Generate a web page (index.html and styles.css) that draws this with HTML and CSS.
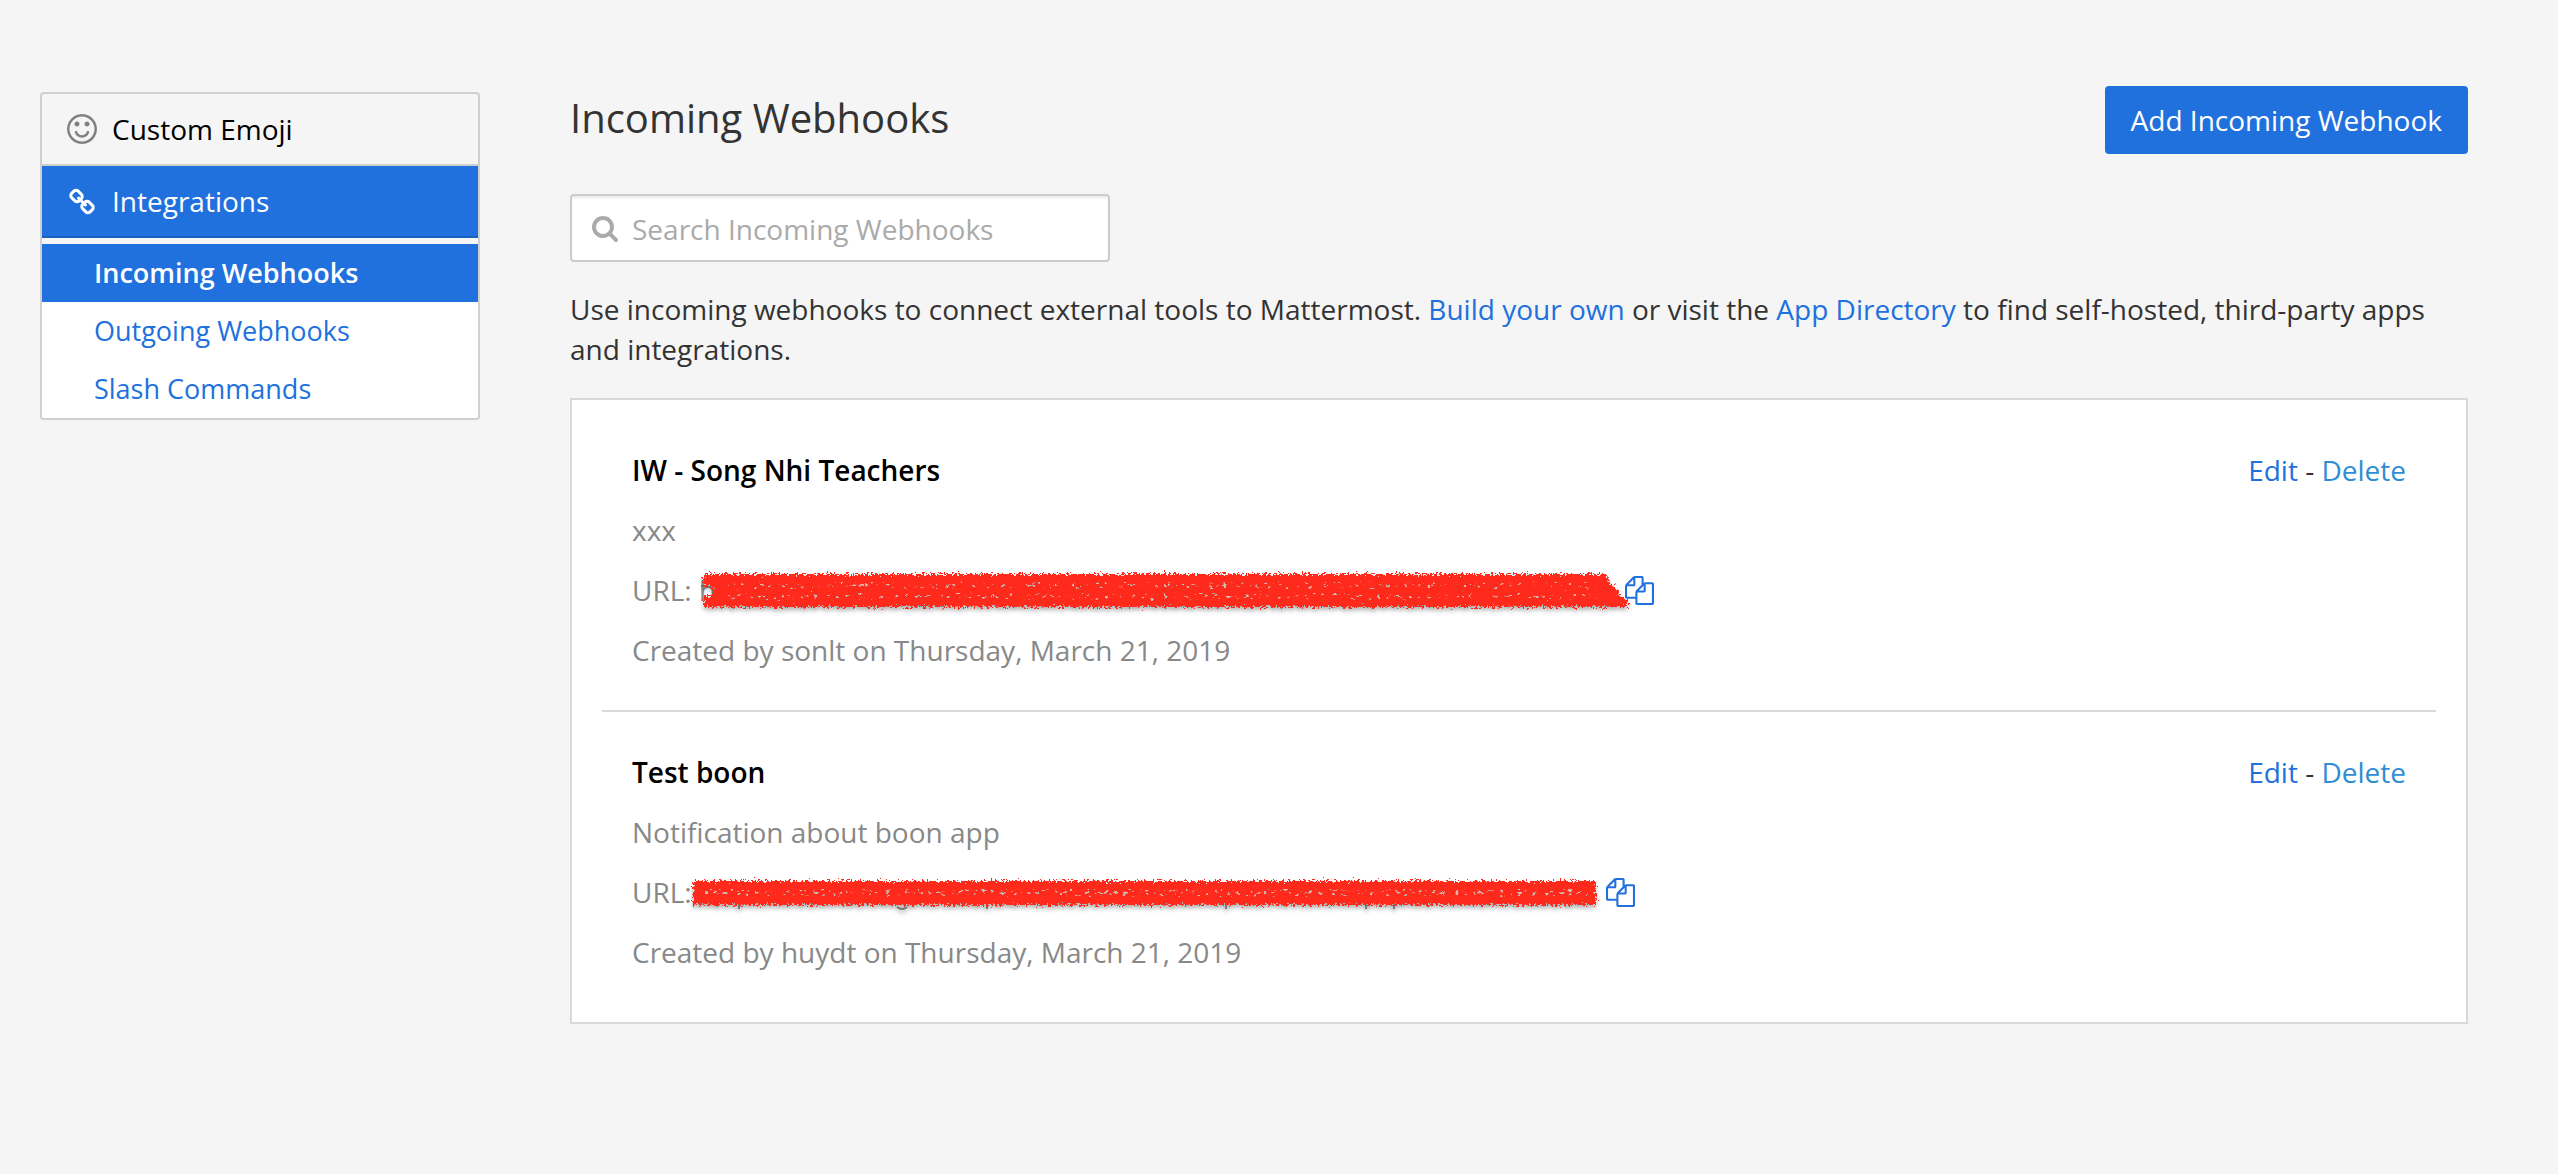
FILE: index.html
```html
<!DOCTYPE html>
<html lang="en">
<head>
<meta charset="utf-8">
<title>Incoming Webhooks</title>
<link rel="stylesheet" href="styles.css">
</head>
<body>
<svg class="defs" aria-hidden="true">
  <defs>
    <symbol id="icon-copy" viewBox="0 0 1792 1792"><path d="M1696 384q40 0 68 28t28 68v1216q0 40-28 68t-68 28h-960q-40 0-68-28t-28-68v-288h-544q-40 0-68-28t-28-68v-672q0-40 20-88t48-76l408-408q28-28 76-48t88-20h416q40 0 68 28t28 68v328q68-40 128-40h416zm-544 213l-299 299h299v-299zm-640-384l-299 299h299v-299zm196 647l316-316v-416h-384v416q0 40-28 68t-68 28h-416v640h512v-256q0-40 20-88t48-76zm956 804v-1152h-384v416q0 40-28 68t-68 28h-416v640h896z"/></symbol>
    <!-- Crayon stroke: ragged outline, grainy holes along the pen passes -->
    <filter id="crayon" x="-1%" y="-20%" width="102%" height="150%">
      <feTurbulence type="fractalNoise" baseFrequency="0.45" numOctaves="3" seed="4" result="edge"/>
      <feDisplacementMap in="SourceGraphic" in2="edge" scale="10" xChannelSelector="R" yChannelSelector="G"/>
    </filter>
    <filter id="grain" x="-1%" y="-20%" width="102%" height="150%">
      <feTurbulence type="fractalNoise" baseFrequency="0.22 0.35" numOctaves="2" seed="9" result="noise"/>
      <feColorMatrix in="noise" type="matrix" values="0 0 0 0 .62  0 0 0 0 .5  0 0 0 0 .46  9 0 0 0 -5.2" result="holes"/>
      <feDisplacementMap in="SourceAlpha" in2="noise" scale="12" xChannelSelector="R" yChannelSelector="G" result="band"/>
      <feComposite in="holes" in2="band" operator="in"/>
    </filter>
  </defs>
</svg>

<div class="layout">
  <nav class="sidebar" aria-label="Backstage">
    <a class="category" href="#emoji">
      <svg class="category-icon" viewBox="128 128 1536 1536" aria-hidden="true"><path d="M1262 1075q-37 121-138 195t-228 74-228-74-138-195q-8-25 4-48.5t38-31.5q25-8 48.5 4t31.5 38q25 80 92.5 129.5t151.5 49.5 151.5-49.5 92.5-129.5q8-26 32-38t49-4 37 31.5 4 48.5zm-494-435q0 53-37.5 90.5t-90.5 37.5-90.5-37.5-37.5-90.5 37.5-90.5 90.5-37.5 90.5 37.5 37.5 90.5zm512 0q0 53-37.5 90.5t-90.5 37.5-90.5-37.5-37.5-90.5 37.5-90.5 90.5-37.5 90.5 37.5 37.5 90.5zm256 256q0-130-51-248.5t-136.5-204-204-136.5-248.5-51-248.5 51-204 136.5-136.5 204-51 248.5 51 248.5 136.5 204 204 136.5 248.5 51 248.5-51 204-136.5 136.5-204 51-248.5zm128 0q0 209-103 385.5t-279.5 279.5-385.5 103-385.5-103-279.5-279.5-103-385.5 103-385.5 279.5-279.5 385.5-103 385.5 103 279.5 279.5 103 385.5z"/></svg>
      <span>Custom Emoji</span>
    </a>
    <a class="category category-active" href="#integrations">
      <svg class="category-icon" viewBox="-64 -160 1920 1920" aria-hidden="true"><path d="M1520 1216q0-40-28-68l-208-208q-28-28-68-28-42 0-72 32 3 3 19 18.5t21.5 21.5 15 19 13 25.5 3.5 27.5q0 40-28 68t-68 28q-15 0-27.5-3.5t-25.5-13-19-15-21.5-21.5-18.5-19q-33 31-33 73 0 40 28 68l206 207q27 27 68 27 40 0 68-26l147-146q28-28 28-67zm-703-705q0-40-28-68l-206-207q-28-28-68-28-39 0-68 27l-147 146q-28 28-28 67 0 40 28 68l208 208q27 27 68 27 42 0 72-31-3-3-19-18.5t-21.5-21.5-15-19-13-25.5-3.5-27.5q0-40 28-68t68-28q15 0 27.5 3.5t25.5 13 19 15 21.5 21.5 18.5 19q33-31 33-73zm895 705q0 120-85 203l-147 146q-83 83-203 83-121 0-204-85l-206-207q-83-83-83-203 0-123 88-209l-88-88q-86 88-208 88-120 0-204-84l-208-208q-84-84-84-204t85-203l147-146q83-83 203-83 121 0 204 85l206 207q83 83 83 203 0 123-88 209l88 88q86-88 208-88 120 0 204 84l208 208q84 84 84 204z"/></svg>
      <span>Integrations</span>
    </a>
    <div class="sections">
      <a class="section section-active" href="#incoming">Incoming Webhooks</a>
      <a class="section" href="#outgoing">Outgoing Webhooks</a>
      <a class="section" href="#commands">Slash Commands</a>
    </div>
  </nav>

  <main class="content">
    <header class="page-header">
      <h1 class="page-title">Incoming Webhooks</h1>
      <button class="add-button" type="button">Add Incoming Webhook</button>
    </header>

    <label class="search">
      <svg class="search-icon" viewBox="64 128 1664 1664" aria-hidden="true"><path d="M1216 832q0-185-131.5-316.5t-316.5-131.5-316.5 131.5-131.5 316.5 131.5 316.5 316.5 131.5 316.5-131.5 131.5-316.5zm512 832q0 52-38 90t-90 38q-54 0-90-38l-343-342q-179 124-399 124-143 0-273.5-55.5t-225-150-150-225-55.5-273.5 55.5-273.5 150-225 225-150 273.5-55.5 273.5 55.5 225 150 150 225 55.5 273.5q0 220-124 399l343 343q37 37 37 90z"/></svg>
      <input class="search-input" type="search" placeholder="Search Incoming Webhooks" aria-label="Search Incoming Webhooks">
    </label>

    <p class="intro">Use incoming webhooks to connect external tools to Mattermost. <a href="#build">Build your own</a> or visit the <a href="#apps">App Directory</a> to find self-hosted, third-party apps and integrations.</p>

    <div class="list">
      <article class="item">
        <div class="item-head">
          <h2 class="item-title">IW - Song Nhi Teachers</h2>
          <div class="item-actions"><a href="#edit">Edit</a> - <a class="delete" href="#delete">Delete</a></div>
        </div>
        <p class="item-line">xxx</p>
        <div class="item-line item-url">
          <span>URL: h</span>
          <a class="copy copy-first" href="#copy" aria-label="Copy link"><svg class="copy-icon" aria-hidden="true"><use href="#icon-copy"/></svg></a>
          <svg class="scribble scribble-first" viewBox="0 0 930 44" aria-hidden="true">
            <path class="ink" filter="url(#crayon)" d="M3 4H906L910 14 917 18 919 26 928 30V37H4V26H12V16H3z"/>
            <path filter="url(#grain)" d="M30 14H900V17H30zM30 25H900V28H30z"/>
          </svg>
        </div>
        <p class="item-line">Created by sonlt on Thursday, March 21, 2019</p>
      </article>

      <article class="item">
        <div class="item-head">
          <h2 class="item-title">Test boon</h2>
          <div class="item-actions"><a href="#edit">Edit</a> - <a class="delete" href="#delete">Delete</a></div>
        </div>
        <p class="item-line">Notification about boon app</p>
        <div class="item-line item-url">
          <span>URL:</span>
          <a class="copy copy-second" href="#copy" aria-label="Copy link"><svg class="copy-icon" aria-hidden="true"><use href="#icon-copy"/></svg></a>
          <svg class="scribble scribble-second" viewBox="0 0 930 44" aria-hidden="true">
            <path class="descenders" d="M48 30V37M296 30V37M535 30V37M675 30V37M703 30V37M206 35q5 4 10 0"/>
            <path class="ink" filter="url(#crayon)" d="M2 9H905V33H2z"/>
            <path filter="url(#grain)" d="M16 18H900V23H16z"/>
          </svg>
        </div>
        <p class="item-line">Created by huydt on Thursday, March 21, 2019</p>
      </article>
    </div>
  </main>
</div>
</body>
</html>
```

FILE: styles.css
```css
* {
  box-sizing: border-box;
}

body {
  margin: 0;
  background: #f5f5f5;
  color: #333;
  font: 28px/40px "Open Sans", sans-serif;
}

a {
  color: #2071dd;
  text-decoration: none;
}

.defs {
  position: absolute;
  width: 0;
  height: 0;
}

.layout {
  display: grid;
  grid-template-columns: 440px minmax(0, 1fr);
  column-gap: 90px;
  align-items: start;
  padding: 86px 90px 150px 40px;
}

/* Sidebar */

.sidebar {
  margin-top: 6px;
  border: 2px solid #d0d0d0;
  border-radius: 4px;
  overflow: hidden;
}

.category {
  display: flex;
  align-items: center;
  gap: 15px;
  height: 72px;
  padding-left: 25px;
  border-bottom: 2px solid #d0d0d0;
  color: #000;
}

.category-icon {
  width: 30px;
  height: 30px;
  fill: #808080;
}

.category-active {
  background: #2071dd;
  border-bottom-color: #1a61c0;
  color: #fff;
}

.category-active .category-icon {
  fill: #fff;
}

.sections {
  padding-top: 6px;
}

.section {
  display: block;
  padding: 9px 52px;
  background: #fff;
  font-size: 27px;
}

.section-active {
  background: #2071dd;
  color: #fff;
  font-weight: 600;
}

/* Page */

.page-header {
  display: flex;
  justify-content: space-between;
  align-items: flex-start;
}

.page-title {
  margin: 4px 0 0;
  font-size: 40px;
  font-weight: 400;
  line-height: 56px;
}

.add-button {
  height: 68px;
  padding: 0 26px;
  border: 0;
  border-radius: 4px;
  background: #2071dd;
  color: #fff;
  font: inherit;
}

.search {
  display: flex;
  align-items: center;
  gap: 14px;
  width: 540px;
  max-width: 100%;
  height: 68px;
  margin-top: 40px;
  padding: 2px 20px 0;
  border: 2px solid #ccc;
  border-radius: 4px;
  background: #fff;
  box-shadow: inset 0 2px 2px rgba(0, 0, 0, .075);
}

.search-icon {
  flex: none;
  width: 26px;
  height: 26px;
  fill: #aaa;
}

.search-input {
  flex: 1;
  min-width: 0;
  padding: 0;
  border: 0;
  outline: 0;
  background: transparent;
  color: #333;
  font: inherit;
}

.search-input::placeholder {
  color: #aaa;
  opacity: 1;
}

.intro {
  margin: 27px 0 29px;
}

/* Webhook list */

.list {
  padding: 10px 30px;
  border: 2px solid #d9d9d9;
  background: #fff;
}

.item {
  display: flex;
  flex-direction: column;
  gap: 20px;
  padding: 40px 30px;
}

.item + .item {
  border-top: 2px solid #d9d9d9;
}

.item-head {
  display: flex;
  justify-content: space-between;
}

.item-title {
  margin: 0;
  color: #000;
  font: inherit;
  font-weight: 600;
}

.delete {
  color: #2f8dd6;
}

.item-line {
  margin: 0;
  color: #888;
}

.item-url {
  display: flex;
  align-items: center;
  position: relative;
}

.item-url > span {
  width: 85px;
  white-space: nowrap;
}

.copy {
  display: flex;
}

.copy-first {
  margin-left: 908px;
}

.copy-second {
  margin-left: 889px;
}

.copy-icon {
  width: 29px;
  height: 29px;
  fill: #2071dd;
}

/* Hand-drawn marks over the addresses */

.scribble {
  position: absolute;
  top: 0;
  width: 930px;
  height: 44px;
  overflow: visible;
  filter: drop-shadow(0 3px 2px rgba(0, 0, 0, .3));
}

.scribble-first {
  left: 68px;
}

.scribble-second {
  left: 59px;
}

.ink {
  fill: #ff2a1c;
}

.descenders {
  fill: none;
  stroke: #777;
  stroke-width: 2px;
}
```
